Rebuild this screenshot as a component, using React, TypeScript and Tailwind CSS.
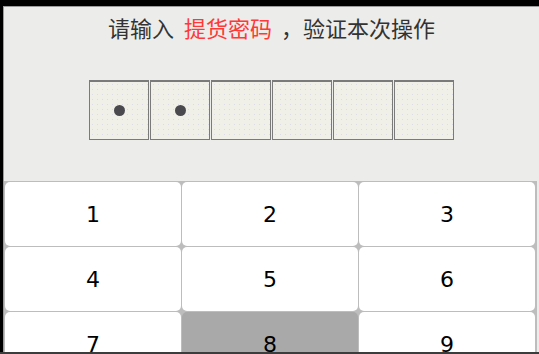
import React from "react";

const keys = ["1", "2", "3", "4", "5", "6", "7", "8", "9"];
const filled = 2;

export default function App() {
  return (
    <div className="w-[539px] h-[354px] bg-black overflow-hidden flex flex-col">
      <div className="flex-1 min-h-0 mt-[6px] ml-[3px] border-l border-t border-[#9c9c9c] bg-[#ececea] flex flex-col overflow-hidden">
        <div
          className="shrink-0 h-[40px] flex items-center justify-center text-[22px] text-[#333] leading-none"
          style={{ fontFamily: '"Noto Sans CJK SC", sans-serif' }}
        >
          <span>请输入</span>
          <span className="ml-[10px] text-[#ff3838]">提货密码</span>
          <span className="ml-[9px]">，</span>
          <span>验证本次操作</span>
        </div>

        <div className="shrink-0 mt-[33px] flex justify-center gap-[1px]">
          {Array.from({ length: 6 }).map((_, i) => (
            <div
              key={i}
              className="w-[60px] h-[60px] border border-t-2 border-[#7a7a7a] bg-[#f0efe8] bg-[radial-gradient(#dcdce6_0.6px,transparent_0.8px)] bg-[length:5px_5px] flex items-center justify-center"
            >
              {i < filled && <span className="w-[11px] h-[11px] rounded-full bg-[#4a4a4e]" />}
            </div>
          ))}
        </div>

        <div className="shrink-0 mt-[41px] mr-[2px] bg-[#bdbdbd] pt-[1px] pl-[1px] pr-[2px] grid grid-cols-3 gap-[1px]">
          {keys.map((k) => (
            <div
              key={k}
              className={`h-[64px] rounded-[5px] flex items-center justify-center text-[22px] text-black ${
                k === "8" ? "bg-[#a9a9a9]" : "bg-white"
              }`}
              style={{ fontFamily: '"DejaVu Sans", sans-serif' }}
            >
              {k}
            </div>
          ))}
        </div>
      </div>
      <div className="shrink-0 h-[2px] bg-[#3c3c3c]" />
    </div>
  );
}
